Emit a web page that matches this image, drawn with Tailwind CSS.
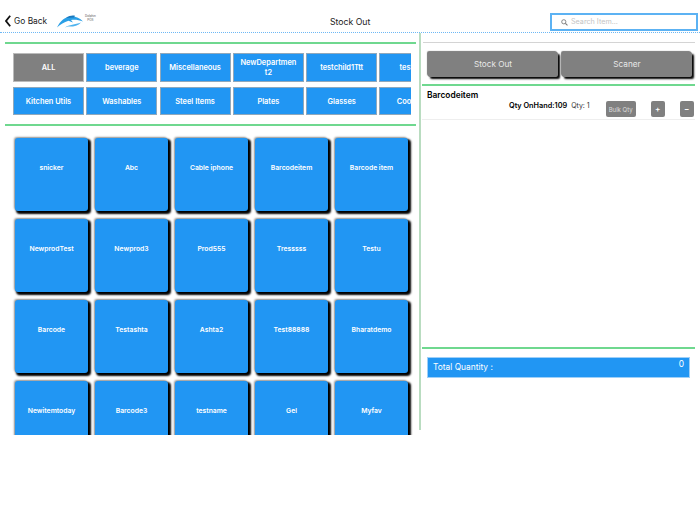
<html>
<head>
    <title>Stock Out</title>
    <script src="https://cdn.jsdelivr.net/npm/@tailwindcss/browser@4"></script>
</head>
<body class="bg-white font-['Inter',sans-serif] text-black w-[700px] h-[525px] overflow-hidden">
    <!-- Header -->
    <div class="relative flex items-center h-[33px] border-b border-dotted border-[#6db8f5]">
        <svg class="ml-[5px] mt-[10px]" width="6" height="12" viewBox="0 0 6 12"><path d="M5.2 .8 L1 6 L5.2 11.2" fill="none" stroke="#111" stroke-width="1.8"/></svg>
        <span class="ml-[3px] mt-[10px] w-[33px] text-[8.4px] text-[#222] whitespace-nowrap">Go Back</span>
        <svg class="ml-[10px] mt-[11px]" width="27" height="13" viewBox="0 0 27 13"><path d="M0 12.5 C3 6 8 1.5 15 1.5 C19 1.5 23 3 26 6.5 C22 5 18 4.5 14 5 L16 7.5 L11.5 5.8 C7 7 3.5 9.5 0 12.5Z" fill="#2a9fe6"/><path d="M8 12.5 C12 9.5 18 9.5 24 7.5 C21 11 15 12 11 11.5Z" fill="#4fb3ee"/><path d="M9 3 C12 .8 15 .2 18 .8 L17 2.5Z" fill="#1a78bd"/></svg>
        <span class="ml-[1px] mt-[4px] text-[3px] leading-[4px] text-[#555] text-center">Dolphin<br>POS</span>
        <span class="absolute left-[330px] top-[16px] text-[8.7px] leading-[12px] text-[#222]">Stock Out</span>
        <div class="absolute left-[550px] top-[13px] w-[148px] h-[18px] flex items-center border-2 border-[#5cb2f3] bg-white">
            <svg class="ml-[9px]" width="7" height="7" viewBox="0 0 8 8"><circle cx="3.2" cy="3.2" r="2.4" fill="none" stroke="#777" stroke-width="1"/><path d="M5 5 L7.4 7.4" stroke="#777" stroke-width="1.2"/></svg>
            <span class="ml-[3px] text-[7.2px] text-[#c4c4c4]">Search Item...</span>
        </div>
    </div>

    <div class="flex h-[402px]">
        <!-- Left pane -->
        <div class="w-[419px] pl-[5px] pr-[3px] pt-[9px]">
            <div class="h-[2px] bg-[#6fd88f]"></div>
            <div class="ml-[8px] mt-[9px] w-[398px] overflow-hidden">
                <div class="flex gap-[2.3px] w-[600px]">
                    <div class="w-[71px] h-[29px] shrink-0 flex items-center justify-center pt-[1px] bg-[#808080] border border-[#bbb] text-white text-[7.4px] font-semibold">ALL</div>
                    <div class="w-[71px] h-[29px] shrink-0 flex items-center justify-center pt-[1px] bg-[#2196f3] border border-[#8fa8bc] text-white text-[7.4px] font-semibold">beverage</div>
                    <div class="w-[71px] h-[29px] shrink-0 flex items-center justify-center pt-[1px] bg-[#2196f3] border border-[#8fa8bc] text-white text-[7.4px] font-semibold">Miscellaneous</div>
                    <div class="w-[71px] h-[29px] shrink-0 flex items-center justify-center bg-[#2196f3] border border-[#8fa8bc] text-white text-[7.4px] leading-[10px] font-semibold text-center break-all px-[6px]">NewDepartment2</div>
                    <div class="w-[71px] h-[29px] shrink-0 flex items-center justify-center pt-[1px] bg-[#2196f3] border border-[#8fa8bc] text-white text-[7.4px] font-semibold">testchild1Ttt</div>
                    <div class="w-[71px] h-[29px] shrink-0 flex items-center justify-center pt-[1px] bg-[#2196f3] border border-[#8fa8bc] text-white text-[7.4px] font-semibold">testchild</div>
                </div>
                <div class="flex gap-[2.3px] w-[600px] mt-[5px]">
                    <div class="w-[71px] h-[28px] shrink-0 flex items-center justify-center pt-[1px] bg-[#2196f3] border border-[#8fa8bc] text-white text-[7.4px] font-semibold">Kitchen Utils</div>
                    <div class="w-[71px] h-[28px] shrink-0 flex items-center justify-center pt-[1px] bg-[#2196f3] border border-[#8fa8bc] text-white text-[7.4px] font-semibold">Washables</div>
                    <div class="w-[71px] h-[28px] shrink-0 flex items-center justify-center pt-[1px] bg-[#2196f3] border border-[#8fa8bc] text-white text-[7.4px] font-semibold">Steel Items</div>
                    <div class="w-[71px] h-[28px] shrink-0 flex items-center justify-center pt-[1px] bg-[#2196f3] border border-[#8fa8bc] text-white text-[7.4px] font-semibold">Plates</div>
                    <div class="w-[71px] h-[28px] shrink-0 flex items-center justify-center pt-[1px] bg-[#2196f3] border border-[#8fa8bc] text-white text-[7.4px] font-semibold">Glasses</div>
                    <div class="w-[71px] h-[28px] shrink-0 flex items-center justify-center pt-[1px] bg-[#2196f3] border border-[#8fa8bc] text-white text-[7.4px] font-semibold">Cookware</div>
                </div>
            </div>
            <div class="h-[2px] bg-[#6fd88f] mt-[9px]"></div>
            <div class="ml-[7px] pl-[3px] mt-[9px] pt-[3px] h-[300px] w-[406px] overflow-hidden">
                <div class="grid grid-cols-[repeat(5,73px)] auto-rows-[73px] gap-x-[7px] gap-y-[8px] text-white text-[6.8px] font-semibold">
                    <div class="flex justify-center pt-[25px] rounded-[3px] bg-[#2196f3] shadow-[2px_2px_2px_1px_#000,-1px_-1px_2px_#999]">snicker</div>
                    <div class="flex justify-center pt-[25px] rounded-[3px] bg-[#2196f3] shadow-[2px_2px_2px_1px_#000,-1px_-1px_2px_#999]">Abc</div>
                    <div class="flex justify-center pt-[25px] rounded-[3px] bg-[#2196f3] shadow-[2px_2px_2px_1px_#000,-1px_-1px_2px_#999]">Cable iphone</div>
                    <div class="flex justify-center pt-[25px] rounded-[3px] bg-[#2196f3] shadow-[2px_2px_2px_1px_#000,-1px_-1px_2px_#999]">Barcodeitem</div>
                    <div class="flex justify-center pt-[25px] rounded-[3px] bg-[#2196f3] shadow-[2px_2px_2px_1px_#000,-1px_-1px_2px_#999]">Barcode item</div>
                    <div class="flex justify-center pt-[25px] rounded-[3px] bg-[#2196f3] shadow-[2px_2px_2px_1px_#000,-1px_-1px_2px_#999]">NewprodTest</div>
                    <div class="flex justify-center pt-[25px] rounded-[3px] bg-[#2196f3] shadow-[2px_2px_2px_1px_#000,-1px_-1px_2px_#999]">Newprod3</div>
                    <div class="flex justify-center pt-[25px] rounded-[3px] bg-[#2196f3] shadow-[2px_2px_2px_1px_#000,-1px_-1px_2px_#999]">Prod555</div>
                    <div class="flex justify-center pt-[25px] rounded-[3px] bg-[#2196f3] shadow-[2px_2px_2px_1px_#000,-1px_-1px_2px_#999]">Tresssss</div>
                    <div class="flex justify-center pt-[25px] rounded-[3px] bg-[#2196f3] shadow-[2px_2px_2px_1px_#000,-1px_-1px_2px_#999]">Testu</div>
                    <div class="flex justify-center pt-[25px] rounded-[3px] bg-[#2196f3] shadow-[2px_2px_2px_1px_#000,-1px_-1px_2px_#999]">Barcode</div>
                    <div class="flex justify-center pt-[25px] rounded-[3px] bg-[#2196f3] shadow-[2px_2px_2px_1px_#000,-1px_-1px_2px_#999]">Testashta</div>
                    <div class="flex justify-center pt-[25px] rounded-[3px] bg-[#2196f3] shadow-[2px_2px_2px_1px_#000,-1px_-1px_2px_#999]">Ashta2</div>
                    <div class="flex justify-center pt-[25px] rounded-[3px] bg-[#2196f3] shadow-[2px_2px_2px_1px_#000,-1px_-1px_2px_#999]">Test88888</div>
                    <div class="flex justify-center pt-[25px] rounded-[3px] bg-[#2196f3] shadow-[2px_2px_2px_1px_#000,-1px_-1px_2px_#999]">Bharatdemo</div>
                    <div class="flex justify-center pt-[25px] rounded-[3px] bg-[#2196f3] shadow-[2px_2px_2px_1px_#000,-1px_-1px_2px_#999]">Newitemtoday</div>
                    <div class="flex justify-center pt-[25px] rounded-[3px] bg-[#2196f3] shadow-[2px_2px_2px_1px_#000,-1px_-1px_2px_#999]">Barcode3</div>
                    <div class="flex justify-center pt-[25px] rounded-[3px] bg-[#2196f3] shadow-[2px_2px_2px_1px_#000,-1px_-1px_2px_#999]">testname</div>
                    <div class="flex justify-center pt-[25px] rounded-[3px] bg-[#2196f3] shadow-[2px_2px_2px_1px_#000,-1px_-1px_2px_#999]">Gel</div>
                    <div class="flex justify-center pt-[25px] rounded-[3px] bg-[#2196f3] shadow-[2px_2px_2px_1px_#000,-1px_-1px_2px_#999]">Myfav</div>
                </div>
            </div>
        </div>

        <!-- Right pane -->
        <div class="w-[281px] h-[397px] border-l-2 border-[#b9dcc0] pl-[1px] pr-[5px] pt-[9px] flex flex-col">
            <div class="h-[1px] bg-[#d4d4d4] ml-[1px]"></div>
            <div class="flex gap-[4px] ml-[6px] mt-[9px] mr-[3px]">
                <div class="flex-1 h-[25px] flex items-center justify-center pb-[1px] rounded-[2px] bg-[#808080] text-[#e8e8e8] text-[8.2px] shadow-[2px_2px_2px_#000,-1px_-1px_1px_#777]">Stock Out</div>
                <div class="flex-1 h-[25px] flex items-center justify-center pb-[1px] rounded-[2px] bg-[#808080] text-[#e8e8e8] text-[8.2px] shadow-[2px_2px_2px_#000,-1px_-1px_1px_#777]">Scaner</div>
            </div>
            <div class="h-[2px] bg-[#6fd88f] mt-[7px]"></div>
            <div class="h-[34px] border-b border-[#eee]">
                <div class="ml-[5px] mt-[3px] text-[8.4px] leading-[12px] font-semibold">Barcodeitem</div>
                <div class="flex">
                    <span class="ml-[87px] text-[7.3px] leading-[10px] font-semibold">Qty OnHand:109</span>
                    <span class="ml-[4px] text-[7px] leading-[10px] text-[#333]">Qty: 1</span>
                    <div class="ml-[16px] w-[30px] h-[16px] flex items-center justify-center rounded-[2px] bg-[#808080] text-[#ddd] text-[6px]">Bulk Qty</div>
                    <div class="ml-[15px] w-[14px] h-[16px] flex items-center justify-center rounded-[2px] bg-[#808080] text-white text-[8px] font-semibold">+</div>
                    <div class="ml-[15px] w-[14px] h-[16px] flex items-center justify-center rounded-[2px] bg-[#808080] text-white text-[8px] font-semibold">−</div>
                </div>
            </div>
            <div class="flex-1"></div>
            <div class="h-[2px] bg-[#6fd88f]"></div>
            <div class="ml-[5px] mr-[5px] mt-[8px] mb-[52px] h-[21px] flex justify-between bg-[#2196f3] border border-[#9fd0f8] text-white px-[5px]">
                <span class="text-[8.4px] leading-[19px]">Total Quantity :</span>
                <span class="text-[8.4px] leading-[12px]">0</span>
            </div>
        </div>
    </div>
</body>
</html>
